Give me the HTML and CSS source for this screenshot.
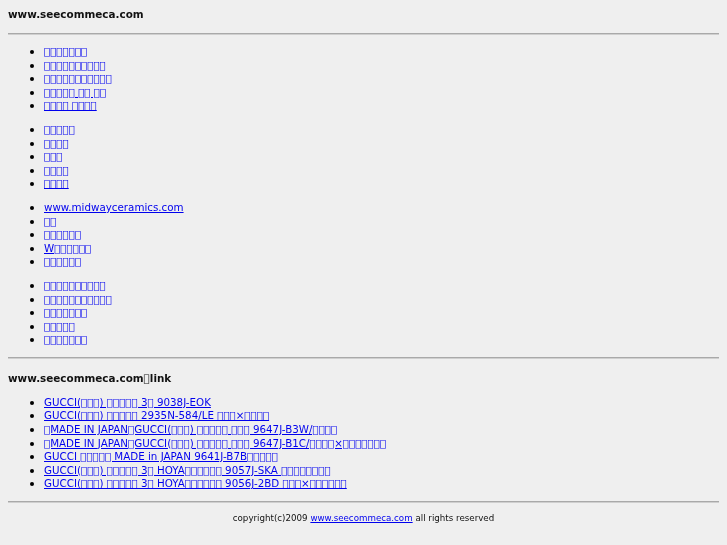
FILE: index.html
```html
<!DOCTYPE html>
<html>
<head>
<meta charset="utf-8">
<title>www.seecommeca.com</title>
<link rel="stylesheet" href="styles.css">
</head>
<body>
<h1 class="title title-top">www.seecommeca.com</h1>
<hr class="rule">
<ul class="menu">
  <li><a href="#">&#xE000;&#xE000;&#xE000;&#xE000;&#xE000;&#xE000;&#xE000;</a></li>
  <li><a href="#">&#xE000;&#xE000;&#xE000;&#xE000;&#xE000;&#xE000;&#xE000;&#xE000;&#xE000;&#xE000;</a></li>
  <li><a href="#">&#xE000;&#xE000;&#xE000;&#xE000;&#xE000;&#xE000;&#xE000;&#xE000;&#xE000;&#xE000;&#xE000;</a></li>
  <li><a href="#">&#xE000;&#xE000;&#xE000;&#xE000;&#xE000; &#xE000;&#xE000; &#xE000;&#xE000;</a></li>
  <li><a href="#">&#xE000;&#xE000;&#xE000;&#xE000; &#xE000;&#xE000;&#xE000;&#xE000;</a></li>
</ul>
<ul class="menu">
  <li><a href="#">&#xE000;&#xE000;&#xE000;&#xE000;&#xE000;</a></li>
  <li><a href="#">&#xE000;&#xE000;&#xE000;&#xE000;</a></li>
  <li><a href="#">&#xE000;&#xE000;&#xE000;</a></li>
  <li><a href="#">&#xE000;&#xE000;&#xE000;&#xE000;</a></li>
  <li><a href="#">&#xE000;&#xE000;&#xE000;&#xE000;</a></li>
</ul>
<ul class="menu">
  <li><a href="#">www.midwayceramics.com</a></li>
  <li><a href="#">&#xE000;&#xE000;</a></li>
  <li><a href="#">&#xE000;&#xE000;&#xE000;&#xE000;&#xE000;&#xE000;</a></li>
  <li><a href="#">W&#xE000;&#xE000;&#xE000;&#xE000;&#xE000;&#xE000;</a></li>
  <li><a href="#">&#xE000;&#xE000;&#xE000;&#xE000;&#xE000;&#xE000;</a></li>
</ul>
<ul class="menu">
  <li><a href="#">&#xE000;&#xE000;&#xE000;&#xE000;&#xE000;&#xE000;&#xE000;&#xE000;&#xE000;&#xE000;</a></li>
  <li><a href="#">&#xE000;&#xE000;&#xE000;&#xE000;&#xE000;&#xE000;&#xE000;&#xE000;&#xE000;&#xE000;&#xE000;</a></li>
  <li><a href="#">&#xE000;&#xE000;&#xE000;&#xE000;&#xE000;&#xE000;&#xE000;</a></li>
  <li><a href="#">&#xE000;&#xE000;&#xE000;&#xE000;&#xE000;</a></li>
  <li><a href="#">&#xE000;&#xE000;&#xE000;&#xE000;&#xE000;&#xE000;&#xE000;</a></li>
</ul>
<hr class="rule">
<h2 class="title title-links">www.seecommeca.com&#xE000;link</h2>
<ul class="menu">
  <li><a href="#">GUCCI(&#xE000;&#xE000;&#xE000;) &#xE000;&#xE000;&#xE000;&#xE000;&#xE000; 3&#xE000; 9038J-EOK</a></li>
  <li><a href="#">GUCCI(&#xE000;&#xE000;&#xE000;) &#xE000;&#xE000;&#xE000;&#xE000;&#xE000; 2935N-584/LE &#xE000;&#xE000;&#xE000;×&#xE000;&#xE000;&#xE000;&#xE000;</a></li>
  <li><a href="#">&#xE000;MADE IN JAPAN&#xE000;GUCCI(&#xE000;&#xE000;&#xE000;) &#xE000;&#xE000;&#xE000;&#xE000;&#xE000; &#xE000;&#xE000;&#xE000; 9647J-B3W/&#xE000;&#xE000;&#xE000;&#xE000;</a></li>
  <li><a href="#">&#xE000;MADE IN JAPAN&#xE000;GUCCI(&#xE000;&#xE000;&#xE000;) &#xE000;&#xE000;&#xE000;&#xE000;&#xE000; &#xE000;&#xE000;&#xE000; 9647J-B1C/&#xE000;&#xE000;&#xE000;&#xE000;×&#xE000;&#xE000;&#xE000;&#xE000;&#xE000;&#xE000;&#xE000;</a></li>
  <li><a href="#">GUCCI &#xE000;&#xE000;&#xE000;&#xE000;&#xE000; MADE in JAPAN 9641J-B7B&#xE000;&#xE000;&#xE000;&#xE000;&#xE000;</a></li>
  <li><a href="#">GUCCI(&#xE000;&#xE000;&#xE000;) &#xE000;&#xE000;&#xE000;&#xE000;&#xE000; 3&#xE000; HOYA&#xE000;&#xE000;&#xE000;&#xE000;&#xE000;&#xE000; 9057J-SKA &#xE000;&#xE000;&#xE000;&#xE000;&#xE000;&#xE000;&#xE000;&#xE000;</a></li>
  <li><a href="#">GUCCI(&#xE000;&#xE000;&#xE000;) &#xE000;&#xE000;&#xE000;&#xE000;&#xE000; 3&#xE000; HOYA&#xE000;&#xE000;&#xE000;&#xE000;&#xE000;&#xE000; 9056J-2BD &#xE000;&#xE000;&#xE000;×&#xE000;&#xE000;&#xE000;&#xE000;&#xE000;&#xE000;</a></li>
</ul>
<hr class="rule">
<p class="copyright">copyright(c)2009 <a href="#">www.seecommeca.com</a> all rights reserved</p>
</body>
</html>
```
FILE: styles.css
```css
html {
  background: #efefef;
}
body {
  margin: 8px;
  font-family: "DejaVu Sans", sans-serif;
  font-size: 10.3px;
  color: #000;
  will-change: transform;
}
a,
a:visited {
  color: #0000ee;
}
.title {
  margin: 0;
  font-size: 10.4px;
  line-height: 12px;
  font-weight: bold;
  color: #111;
}
.title-top {
  margin-bottom: 13px;
}
.title-links {
  margin: 13px 0 12px;
}
.rule {
  margin: 10px 0;
  border: 0;
  border-top: 1px solid #a9a9a9;
  border-bottom: 1px solid #cfcfcf;
  height: 0;
}
.menu {
  margin: 10px 0;
  padding-left: 36px;
  line-height: 13.6px;
}
.menu li::marker {
  font-size: 12px;
  color: #000;
}
.copyright {
  margin: 8px 0;
  text-align: center;
  font-size: 8.7px;
  color: #111;
}
```
